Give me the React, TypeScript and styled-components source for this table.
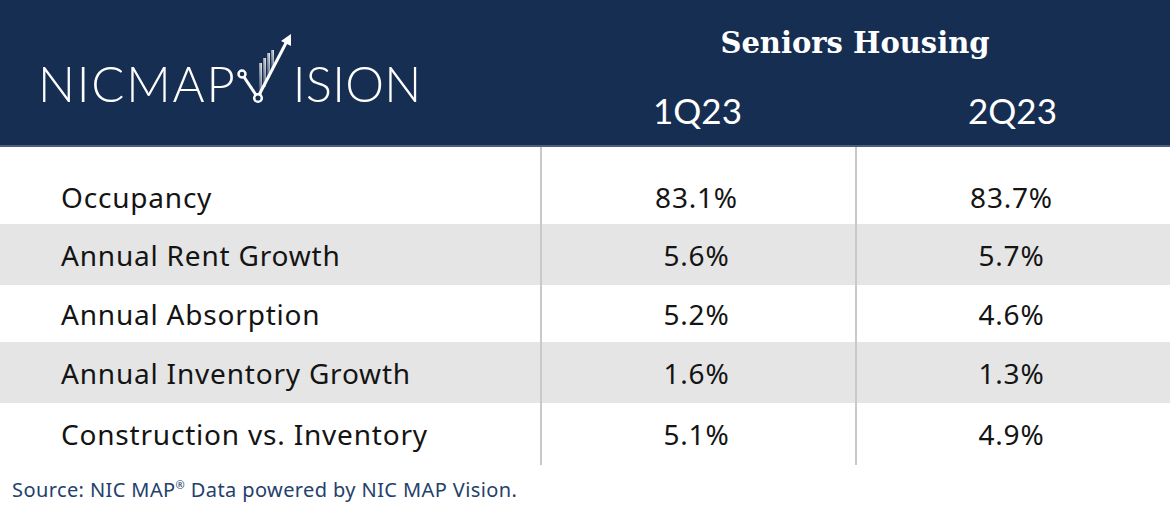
import React from "react"
import styled, { createGlobalStyle } from "styled-components"

const GlobalStyle = createGlobalStyle`
  html, body {
    margin: 0;
    padding: 0;
    background: #ffffff;
  }
  body {
    width: 1170px;
    height: 510px;
    overflow: hidden;
  }
`

const Page = styled.div`
  width: 1170px;
  height: 510px;
  display: flex;
  flex-direction: column;
  background: #ffffff;
`

const Header = styled.div`
  height: 145px;
  display: flex;
  background: #172e53;
  border-bottom: 2px solid #4d5f7e;
`

const LogoArea = styled.div`
  width: 540px;
  display: flex;
  align-items: flex-end;
  padding: 0 0 42px 38px;
  box-sizing: border-box;
`

const LogoText = styled.span<{ $tight?: boolean }>`
  font-family: "Lato", "Liberation Sans", sans-serif;
  font-weight: 300;
  font-size: 49px;
  line-height: 40px;
  color: #ffffff;
  letter-spacing: ${(p) => (p.$tight ? "0.3px" : "1.8px")};
`

const HeadRight = styled.div`
  width: 630px;
  display: flex;
  flex-direction: column;
`

const Title = styled.div`
  height: 82px;
  display: flex;
  align-items: center;
  justify-content: center;
  padding-top: 4px;
  box-sizing: border-box;
  font-family: "DejaVu Serif", "Liberation Serif", serif;
  font-weight: 700;
  font-size: 29px;
  color: #ffffff;
`

const QuarterRow = styled.div`
  display: grid;
  grid-template-columns: 315px 315px;
`

const Quarter = styled.div`
  text-align: center;
  font-family: "Lato", "Liberation Sans", sans-serif;
  font-size: 35px;
  color: #ffffff;
  line-height: 56px;
`

const Body = styled.div`
  display: grid;
  grid-template-columns: 540px 315px 315px;
`

const Cell = styled.div<{ $shade: boolean; $h: number; $first?: boolean; $label?: boolean }>`
  height: ${(p) => p.$h}px;
  display: flex;
  align-items: center;
  justify-content: ${(p) => (p.$label ? "flex-start" : "center")};
  padding: ${(p) => (p.$label ? "0 0 0 61px" : "0 4px 0 0")};
  padding-top: ${(p) => (p.$first ? "22px" : "0")};
  box-sizing: border-box;
  background: ${(p) => (p.$shade ? "#e5e5e5" : "#ffffff")};
  border-left: ${(p) => (p.$label ? "none" : "2px solid #c9c9c9")};
  font-family: "Noto Sans", "Open Sans", sans-serif;
  font-size: 28px;
  letter-spacing: 0.8px;
  color: #141414;
`

const Source = styled.div`
  padding: 11px 0 0 12px;
  font-family: "Noto Sans", "Open Sans", sans-serif;
  font-size: 20px;
  letter-spacing: 0.4px;
  color: #24406b;
  sup {
    font-size: 11px;
  }
`

const rows = [
  { label: "Occupancy", a: "83.1%", b: "83.7%", h: 77 },
  { label: "Annual Rent Growth", a: "5.6%", b: "5.7%", h: 61 },
  { label: "Annual Absorption", a: "5.2%", b: "4.6%", h: 57 },
  { label: "Annual Inventory Growth", a: "1.6%", b: "1.3%", h: 61 },
  { label: "Construction vs. Inventory", a: "5.1%", b: "4.9%", h: 62 },
]

// the "V" of VISION: check mark, rising bars and arrow
const VisionMark = () => (
  <svg width="56" height="72" viewBox="0 0 56 72" style={{ margin: "0 0 -3px 0" }}>
    <defs>
      <linearGradient id="bars" x1="0" y1="1" x2="1" y2="0">
        <stop offset="0" stopColor="#ffffff" stopOpacity="0.05" />
        <stop offset="1" stopColor="#ffffff" stopOpacity="0.95" />
      </linearGradient>
    </defs>
    <rect x="22" y="29" width="3" height="32" fill="url(#bars)" />
    <rect x="26" y="24" width="3" height="29" fill="url(#bars)" />
    <rect x="30" y="19" width="3" height="25" fill="url(#bars)" />
    <rect x="34" y="16" width="3" height="20" fill="url(#bars)" />
    <line x1="7" y1="43" x2="19" y2="61" stroke="#fff" strokeWidth="3" />
    <line x1="22" y1="61" x2="50" y2="7" stroke="#fff" strokeWidth="3" />
    <polygon points="54,0 54,12 44,7" fill="#fff" />
    <circle cx="5" cy="40" r="3.5" fill="#172e53" stroke="#fff" strokeWidth="2.5" />
    <circle cx="21" cy="64" r="3.8" fill="#172e53" stroke="#fff" strokeWidth="2.5" />
  </svg>
)

export default function App() {
  return (
    <Page>
      <GlobalStyle />
      <Header>
        <LogoArea>
          <LogoText>NICMAP</LogoText>
          <VisionMark />
          <LogoText $tight>ISION</LogoText>
        </LogoArea>
        <HeadRight>
          <Title>Seniors Housing</Title>
          <QuarterRow>
            <Quarter>1Q23</Quarter>
            <Quarter>2Q23</Quarter>
          </QuarterRow>
        </HeadRight>
      </Header>
      <Body>
        {rows.map((r, i) => (
          <React.Fragment key={r.label}>
            <Cell $shade={i % 2 === 1} $h={r.h} $first={i === 0} $label>
              {r.label}
            </Cell>
            <Cell $shade={i % 2 === 1} $h={r.h} $first={i === 0}>
              {r.a}
            </Cell>
            <Cell $shade={i % 2 === 1} $h={r.h} $first={i === 0}>
              {r.b}
            </Cell>
          </React.Fragment>
        ))}
      </Body>
      <Source>
        Source: NIC MAP<sup>®</sup> Data powered by NIC MAP Vision.
      </Source>
    </Page>
  )
}
